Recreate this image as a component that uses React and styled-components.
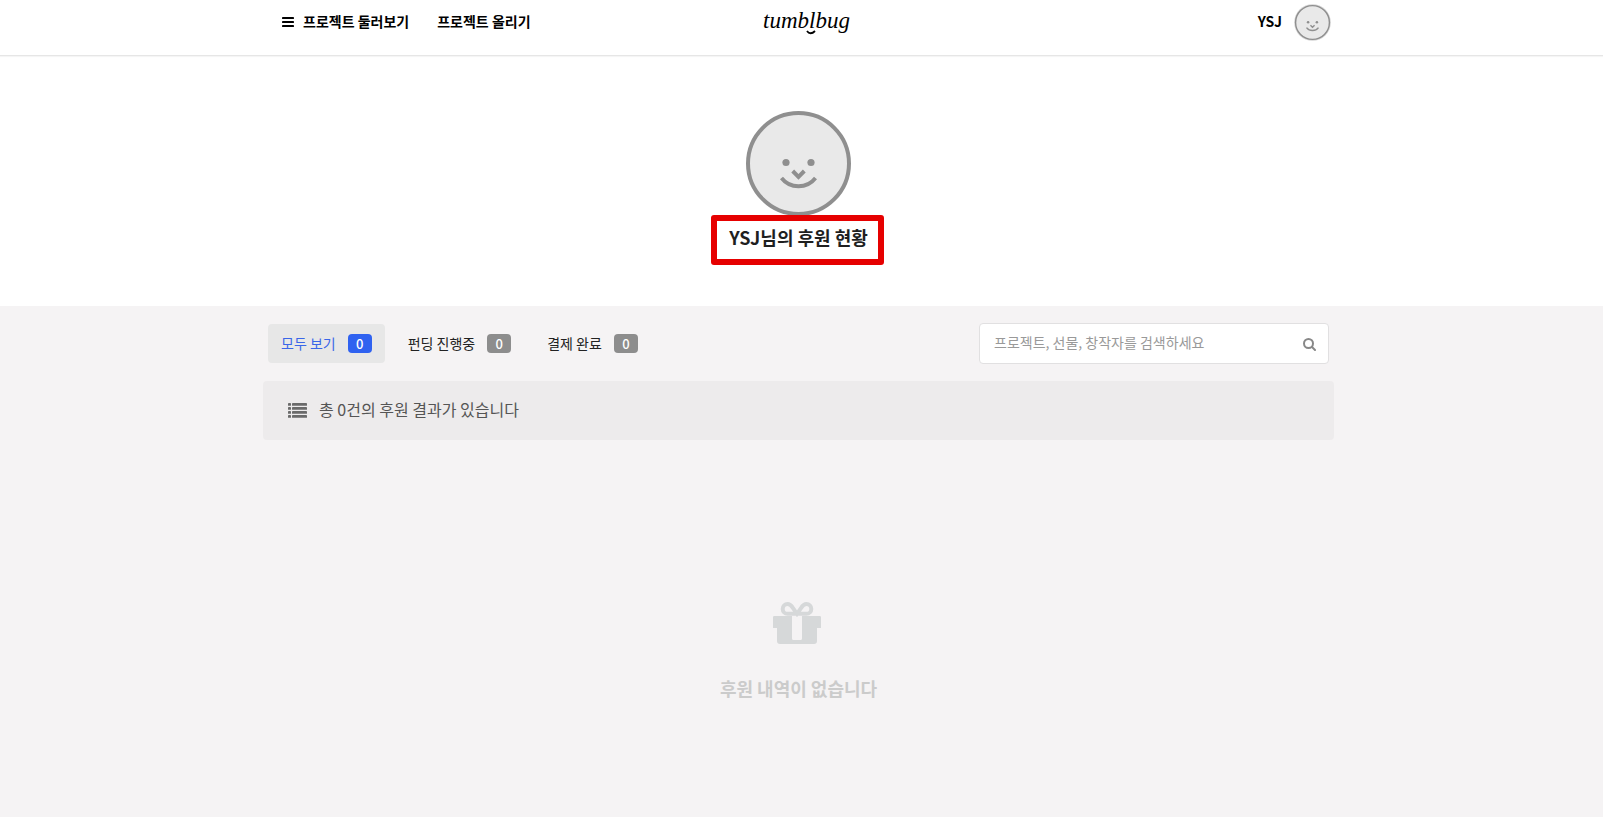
import React from "react";
import styled, { createGlobalStyle } from "styled-components";

const GlobalStyle = createGlobalStyle`
  *, *::before, *::after { box-sizing: border-box; }
  body {
    margin: 0;
    background: #f5f3f4;
    color: #1f1f1f;
    font-family: "Noto Sans CJK KR", "Noto Sans", sans-serif;
    font-size: 14px;
    line-height: 20px;
  }
  button, input { font: inherit; }
  a { color: inherit; text-decoration: none; }
`;

const Header = styled.header`
  background: #fff;
  border-bottom: 1px solid #e6e6e6;
  box-shadow: 0 1px 1px rgba(0, 0, 0, 0.04);
  padding: 0 6px 0 0;
  position: relative;
`;

const HeaderInner = styled.div`
  display: grid;
  grid-template-columns: 1fr auto 1fr;
  align-items: center;
  max-width: 1071px;
  height: 55px;
  margin: 0 auto;
  padding: 0 3px 10px 19px;
`;

const Nav = styled.nav`
  display: flex;
  align-items: center;
  gap: 28px;
  padding-bottom: 4px;
`;

const NavLink = styled.a`
  display: flex;
  align-items: center;
  gap: 9px;
  color: #000;
  font-weight: 700;
  white-space: nowrap;
  svg { flex: none; }
`;

const BarsIcon = () => (
  <svg width="12" height="12" viewBox="0 0 12 12" fill="currentColor" aria-hidden="true">
    <rect y="2" width="12" height="2" rx=".4" />
    <rect y="6" width="12" height="2" rx=".4" />
    <rect y="10" width="12" height="2" rx=".4" />
  </svg>
);

const Logo = styled.a`
  position: relative;
  padding-bottom: 4px;
  color: #000;
  font-family: "Liberation Serif", serif;
  font-size: 23px;
  font-style: italic;
  line-height: 20px;
`;

const LogoSmile = styled.svg`
  position: absolute;
  top: 19px;
  left: 43px;
`;

const Account = styled.a`
  display: flex;
  align-items: center;
  justify-self: end;
  gap: 12px;
  color: #000;
  font-weight: 700;
`;

const AccountName = styled.span`
  padding-bottom: 3px;
`;

const Hero = styled.section`
  display: flex;
  flex-direction: column;
  align-items: center;
  gap: 10px;
  padding: 55px 6px 58px 0;
  background: #fff;
`;

const Title = styled.h1`
  position: relative;
  margin: 0;
  font-size: 18px;
  font-weight: 700;
  line-height: 22px;
`;

const Highlight = styled.span`
  position: absolute;
  inset: -11px -16px -17px -18px;
  border: 6px solid #e60000;
  border-radius: 3px;
`;

const Main = styled.main`
  padding: 17px 6px 0 0;
`;

const Content = styled.div`
  max-width: 1071px;
  margin: 0 auto;
`;

const Toolbar = styled.div`
  display: flex;
  align-items: center;
  justify-content: space-between;
  padding: 0 5px;
`;

const Tabs = styled.div`
  display: flex;
  gap: 10px;
`;

const Tab = styled.button`
  display: flex;
  align-items: center;
  gap: 12px;
  height: 39px;
  padding: 0 13px;
  border: 0;
  border-radius: 4px;
  background: ${({ $active }) => ($active ? "#e7e7e7" : "transparent")};
  color: ${({ $active }) => ($active ? "#3a66e8" : "#222")};
  white-space: nowrap;
`;

const TabLabel = styled.span`
  padding-bottom: 2px;
`;

const Badge = styled.span`
  width: 24px;
  height: 19px;
  border-radius: 4px;
  background: ${({ $active }) => ($active ? "#2f62f0" : "#8d8d8d")};
  color: #fff;
  font-size: 13px;
  font-weight: 500;
  line-height: 20px;
  text-align: center;
`;

const Search = styled.form`
  display: flex;
  align-items: center;
  width: 350px;
  height: 41px;
  border: 1px solid #e1e0e1;
  border-radius: 4px;
  background: #fff;
`;

const SearchInput = styled.input`
  flex: 1;
  min-width: 0;
  height: 37px;
  padding: 0 0 3px 14px;
  border: 0;
  outline: 0;
  background: transparent;
  &::placeholder { color: #999; opacity: 1; }
`;

const SearchButton = styled.button`
  display: flex;
  padding: 2px 12px 0;
  border: 0;
  background: transparent;
  color: #888;
`;

const Summary = styled.div`
  display: flex;
  align-items: center;
  gap: 12px;
  height: 59px;
  margin-top: 17px;
  padding: 0 25px;
  border-radius: 4px;
  background: #edebec;
  color: #555;
  font-size: 16px;
  svg { color: #6a6a6a; }
`;

const SummaryText = styled.span`
  padding-bottom: 3px;
`;

const Empty = styled.div`
  display: flex;
  flex-direction: column;
  align-items: center;
  gap: 33px;
  padding: 162px 0 100px;
  color: #cbcbcb;
  font-size: 18px;
  font-weight: 700;
  line-height: 22px;
  svg { color: #d6d8d9; margin-right: 4px; }
  p { margin: 0; }
`;

function Face({ size, stroke, halo }) {
  return (
    <svg width={size} height={size} viewBox="0 0 105 105" fill="none" stroke="#8f8f8f" aria-hidden="true">
      {halo && <circle cx="52.5" cy="52.5" r="52" fill="#d4d4d4" stroke="none" />}
      <circle cx="52.5" cy="52.5" r={(halo ? 50 : 52.5) - stroke / 2} fill="#e9e9e9" strokeWidth={stroke} />
      <circle cx="40" cy="51.5" r="3.6" fill="#8f8f8f" stroke="none" />
      <circle cx="65" cy="51.5" r="3.6" fill="#8f8f8f" stroke="none" />
      <path d="M46.700 60l5.800 5.800 5.800-5.800" strokeWidth="4" />
      <path d="M35.500 67C44 78 61 78 69.500 67" strokeWidth="3.800" />
    </svg>
  );
}

function ListIcon() {
  return (
    <svg width="19" height="15" viewBox="0 0 19 15" fill="currentColor" aria-hidden="true">
      {[0, 4, 8, 12].map((y) => (
        <g key={y}>
          <rect y={y} width="3" height="2.800" rx=".4" />
          <rect x="4" y={y} width="15" height="2.800" rx=".4" />
        </g>
      ))}
    </svg>
  );
}

function SearchIcon() {
  return (
    <svg width="13" height="13" viewBox="0 0 13 13" fill="none" stroke="currentColor" strokeWidth="2" strokeLinecap="round" aria-hidden="true">
      <circle cx="5.500" cy="5.500" r="4.500" />
      <path d="M9 9l3 3" />
    </svg>
  );
}

function GiftIcon() {
  return (
    <svg width="48" height="42" viewBox="0 0 48 42" aria-hidden="true">
      <path
        fill="currentColor"
        fillRule="evenodd"
        d="M1.200 14H46.800Q48 14 48 15.200V26H44V39Q44 42 41 42H7Q4 42 4 39V26H0V15.200Q0 14 1.200 14ZM19 14V36.500Q19 38 20.500 38H27.500Q29 38 29 36.500V14Z"
      />
      <path
        d="M24 11.800L19.700 5.600C18.200 3.200 16.800 2 14.600 2A4.900 4.900 0 0 0 14.600 11.800H33.400A4.900 4.900 0 0 0 33.400 2C31.200 2 29.800 3.200 28.300 5.600Z"
        fill="none"
        stroke="currentColor"
        strokeWidth="4"
      />
    </svg>
  );
}

const tabs = [
  { label: "모두 보기", count: 0, active: true },
  { label: "펀딩 진행중", count: 0 },
  { label: "결제 완료", count: 0 },
];

export default function App() {
  return (
    <>
      <GlobalStyle />
      <Header>
        <HeaderInner>
          <Nav>
            <NavLink href="#discover"><BarsIcon />프로젝트 둘러보기</NavLink>
            <NavLink href="#create">프로젝트 올리기</NavLink>
          </Nav>
          <Logo href="#home">
            tumblbug
            <LogoSmile width="10" height="5" viewBox="0 0 10 5" fill="none" stroke="currentColor" strokeWidth="1.800" aria-hidden="true">
              <path d="M1 1C3 4 6 4 9 1" />
            </LogoSmile>
          </Logo>
          <Account href="#account">
            <AccountName>YSJ</AccountName>
            <Face size={37} stroke={4} halo />
          </Account>
        </HeaderInner>
      </Header>
      <Hero>
        <Face size={105} stroke={4} />
        <Title>YSJ님의 후원 현황<Highlight /></Title>
      </Hero>
      <Main>
        <Content>
          <Toolbar>
            <Tabs>
              {tabs.map(({ label, count, active }) => (
                <Tab key={label} type="button" $active={active}>
                  <TabLabel>{label}</TabLabel>
                  <Badge $active={active}>{count}</Badge>
                </Tab>
              ))}
            </Tabs>
            <Search role="search">
              <SearchInput type="text" aria-label="후원 검색" placeholder="프로젝트, 선물, 창작자를 검색하세요" />
              <SearchButton type="button" aria-label="검색"><SearchIcon /></SearchButton>
            </Search>
          </Toolbar>
          <Summary>
            <ListIcon />
            <SummaryText>총 0건의 후원 결과가 있습니다</SummaryText>
          </Summary>
          <Empty>
            <GiftIcon />
            <p>후원 내역이 없습니다</p>
          </Empty>
        </Content>
      </Main>
    </>
  );
}
